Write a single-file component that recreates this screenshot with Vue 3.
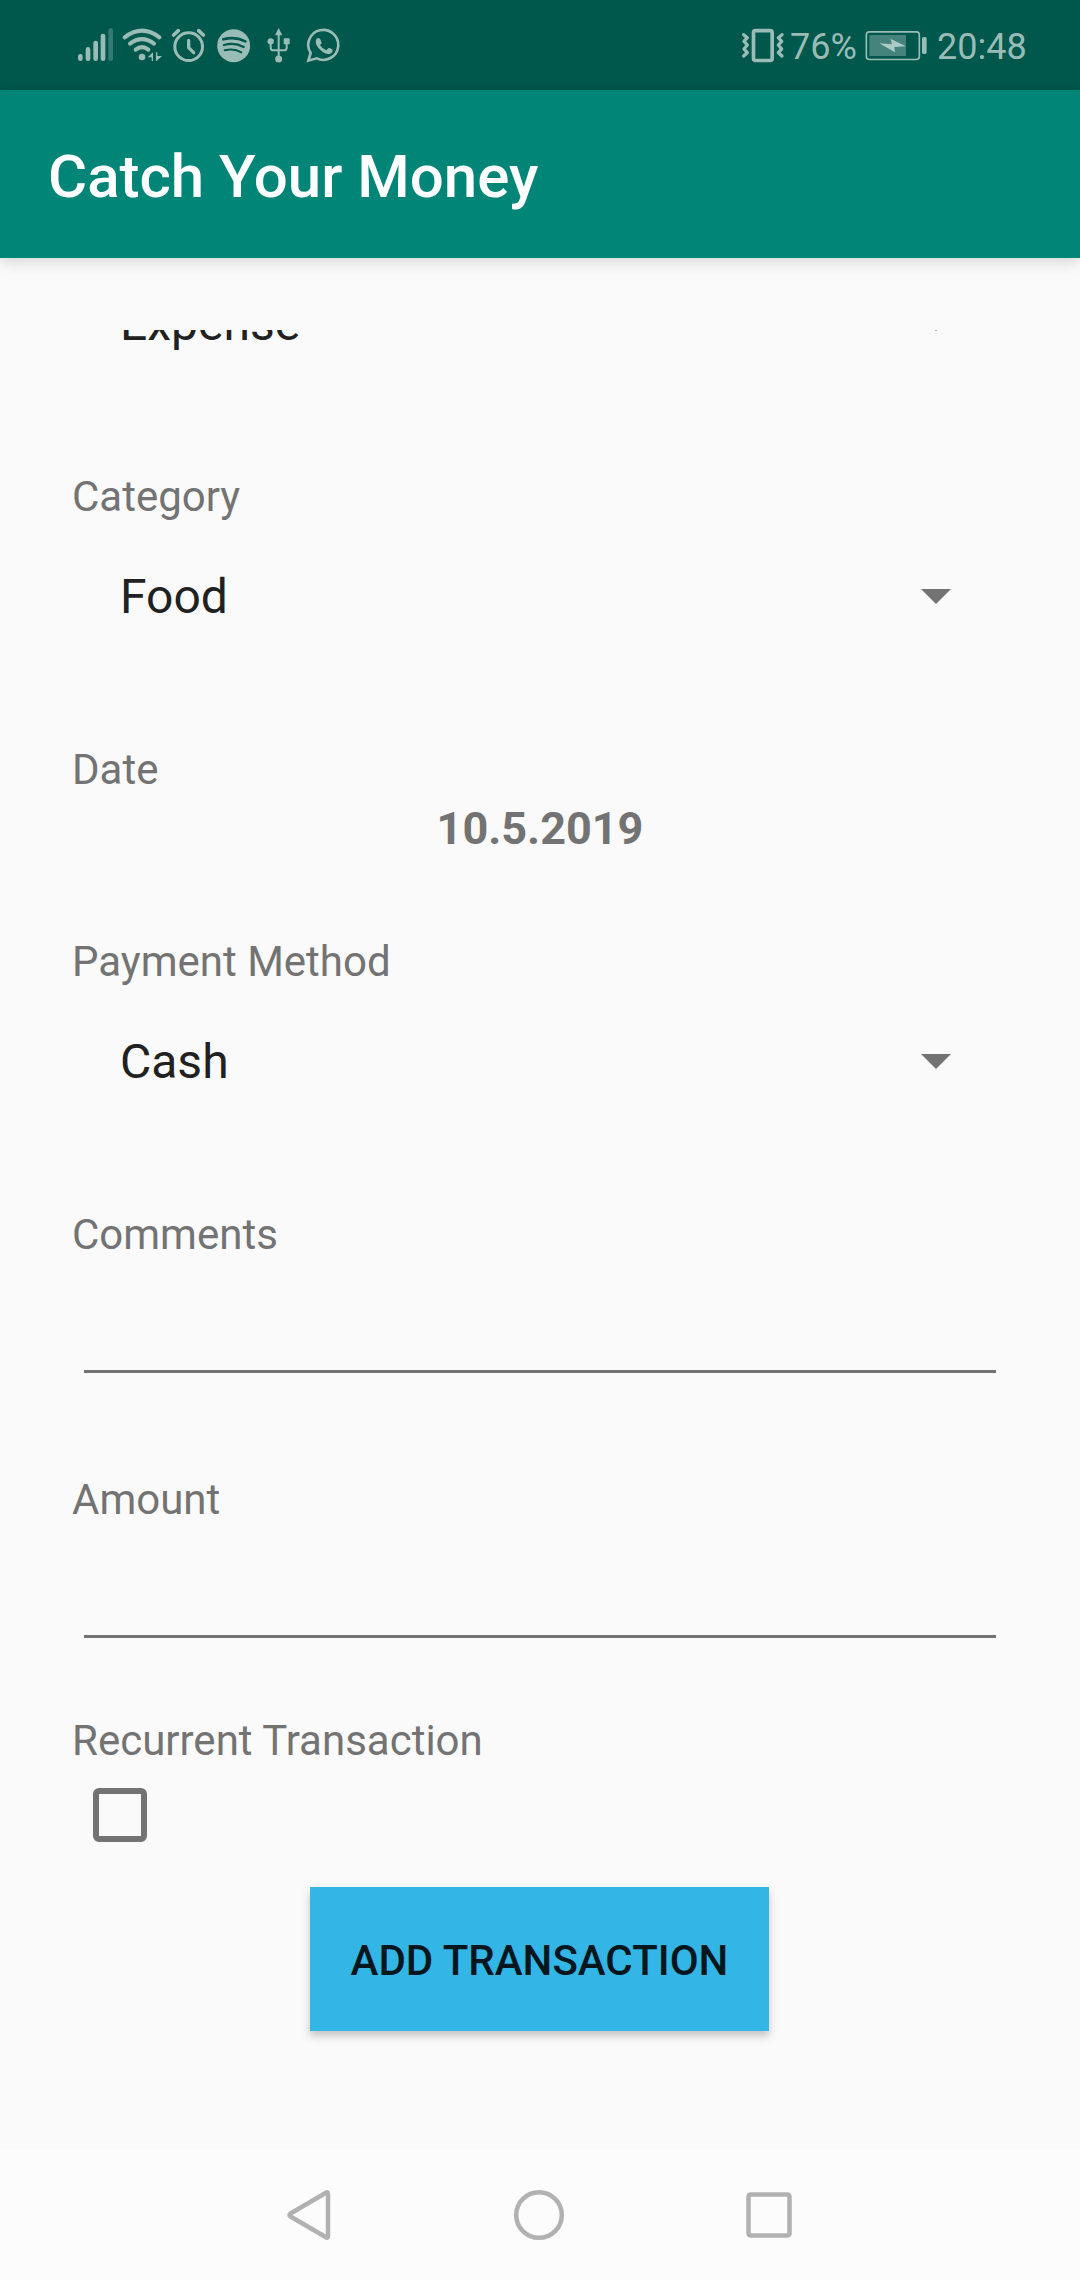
<script setup>
import { ref } from 'vue'

const comments = ref('')
const amount = ref('')
const recurrent = ref(false)
</script>

<template>
  <div class="screen">
    <header class="status">
      <div class="status-left">
        <svg class="ic signal" viewBox="51 45 111 120" width="37" height="40">
          <g stroke="currentColor" stroke-width="14" stroke-linecap="round">
            <path d="M61 139V146M84 118V146M107 99V146M129 78V146" />
            <path d="M152 61V146" opacity=".35" />
          </g>
        </svg>
        <svg class="ic wifi" viewBox="186 45 123 120" width="41" height="40">
          <g fill="none" stroke="currentColor" stroke-width="12" stroke-linecap="round">
            <path d="M194 82Q246 42 298 82" />
            <path d="M210 101Q246 74 282 101" />
            <path d="M227 119Q246 104 265 119" />
          </g>
          <circle cx="246" cy="141" r="10" fill="currentColor" />
          <path d="M263 142L279 127V153H275V142ZM288 127H292V138H306L290 153H288Z" fill="currentColor" />
        </svg>
        <svg class="ic alarm" viewBox="333 45 105 120" width="35" height="40">
          <g fill="none" stroke="currentColor" stroke-width="9">
            <circle cx="386" cy="110" r="41.500" />
            <path d="M386 91V113L401 128" stroke-width="10" stroke-linecap="round" stroke-linejoin="round" />
            <path d="M341 75L355 62M430 75L416 62" stroke-width="11" stroke-linecap="round" />
          </g>
        </svg>
        <svg class="ic music" viewBox="468 45 105 120" width="35" height="40">
          <circle cx="521" cy="107" r="49.500" fill="currentColor" />
          <g fill="none" stroke="#00574b" stroke-linecap="round">
            <path d="M490 88Q525 78 556 94" stroke-width="8" />
            <path d="M492 105Q524 96 551 111" stroke-width="7" />
            <path d="M494 121Q523 114 544 127" stroke-width="6" />
          </g>
        </svg>
        <svg class="ic usb" viewBox="618 45 75 120" width="25" height="40">
          <g fill="none" stroke="currentColor" stroke-width="6">
            <path d="M656 68V145" />
            <path d="M632 96V113Q632 121 640 121H672Q680 121 680 113V96" />
          </g>
          <g fill="currentColor">
            <path d="M656 54L667 76H645Z" />
            <circle cx="632" cy="94" r="9.500" />
            <rect x="671" y="85" width="18" height="18" rx="2" />
            <circle cx="656" cy="147" r="10.500" />
          </g>
        </svg>
        <svg class="ic chat" viewBox="738 45 105 120" width="35" height="40">
          <path d="M745 152L752 129A45 45 0 1 1 770 145Z" fill="none" stroke="currentColor" stroke-width="8" stroke-linejoin="miter" />
          <path d="M769 87Q775 81 780 86L785 98Q784 102 780 105Q787 117 799 121L805 115Q808 113 811 115L818 119Q819 127 811 131Q801 135 787 125Q773 115 768 103Q765 94 769 87Z" fill="currentColor" />
        </svg>
      </div>
      <div class="status-right">
        <svg class="ic vibrate" viewBox="63 45 132 120" width="44" height="40">
          <rect x="100.500" y="62" width="56" height="89.500" rx="6" fill="none" stroke="currentColor" stroke-width="11" />
          <g fill="none" stroke="currentColor" stroke-width="10" stroke-linejoin="round" stroke-linecap="round">
            <path d="M71 74L82 83L72 94L82 105L72 117L82 128L71 138" />
            <path d="M186 74L175 83L185 94L175 105L185 117L175 128L186 138" />
          </g>
        </svg>
        <span class="percent">76%</span>
        <svg class="ic battery" viewBox="435 45 189 120" width="63" height="40">
          <rect x="439" y="65.500" width="159" height="83" rx="9" fill="none" stroke="currentColor" stroke-width="5" />
          <rect x="448" y="75" width="110" height="63" rx="2" fill="currentColor" opacity=".45" />
          <path d="M478 100L516 103L512 87L558 109L523 111L525 127Z" fill="#adcbc6" />
          <rect x="606" y="81" width="14" height="51" rx="5" fill="currentColor" />
        </svg>
        <span class="clock">20:48</span>
      </div>
    </header>

    <div class="appbar"><h1>Catch Your Money</h1></div>

    <main class="form">
      <div class="spinner clipped">
        <span>Expense</span>
        <svg width="30" height="15" viewBox="0 0 30 15"><path d="M0 0H30L15 15Z" /></svg>
      </div>

      <section class="field select">
        <label>Category</label>
        <div class="spinner">
          <span>Food</span>
          <svg width="30" height="15" viewBox="0 0 30 15"><path d="M0 0H30L15 15Z" /></svg>
        </div>
      </section>

      <section class="field day">
        <label>Date</label>
        <div class="date">10.5.2019</div>
      </section>

      <section class="field select">
        <label>Payment Method</label>
        <div class="spinner">
          <span>Cash</span>
          <svg width="30" height="15" viewBox="0 0 30 15"><path d="M0 0H30L15 15Z" /></svg>
        </div>
      </section>

      <section class="field entry">
        <label for="comments">Comments</label>
        <input id="comments" v-model="comments" type="text" />
      </section>

      <section class="field entry last">
        <label for="amount">Amount</label>
        <input id="amount" v-model="amount" type="text" />
      </section>

      <section class="field check">
        <label for="recurrent">Recurrent Transaction</label>
        <input id="recurrent" v-model="recurrent" type="checkbox" />
      </section>

      <button type="button">ADD TRANSACTION</button>
    </main>

    <nav class="navbar">
      <svg width="44" height="52" viewBox="0 0 44 52"><path d="M39 3.700Q41 2.500 41 5V47Q41 49.500 39 48.300L3.500 27.500Q1.500 26 3.500 24.500Z" /></svg>
      <svg width="52" height="52" viewBox="0 0 52 52"><circle cx="26" cy="26" r="22.800" /></svg>
      <svg width="46" height="52" viewBox="0 0 46 52"><rect x="2.500" y="5.500" width="41" height="41" rx="2" /></svg>
    </nav>
  </div>
</template>

<style>
body {
  margin: 0;
  background: #fafafa;
}
</style>

<style scoped>
.screen {
  width: 1080px;
  height: 2280px;
  display: flex;
  flex-direction: column;
  overflow: hidden;
  background: #fafafa;
  font-family: Roboto, "Noto Sans", sans-serif;
}
.status {
  height: 90px;
  flex: none;
  box-sizing: border-box;
  padding: 25px 54px 0 77px;
  display: flex;
  justify-content: space-between;
  background: #00574b;
  color: #99bcb7;
}
.status-left,
.status-right {
  display: flex;
  height: 40px;
}
.ic {
  display: block;
  flex: none;
}
.wifi,
.alarm {
  margin-left: 8px;
}
.music {
  margin-left: 10px;
}
.usb,
.chat {
  margin-left: 15px;
}
.percent,
.clock {
  font-size: 36px;
  line-height: 44px;
  white-space: nowrap;
}
.percent {
  width: 75px;
  margin-left: 5px;
}
.clock {
  width: 89px;
  margin-left: 9px;
}
.appbar {
  height: 168px;
  flex: none;
  box-sizing: border-box;
  display: flex;
  align-items: center;
  padding: 5px 0 0 48px;
  background: #008577;
  box-shadow: 0 3px 14px rgba(0, 0, 0, 0.16);
}
h1 {
  margin: 0;
  font-size: 60px;
  line-height: 72px;
  font-weight: 500;
  color: #fff;
}
.form {
  height: 1750px;
  flex: none;
  margin-top: 72px;
  padding: 0 72px;
  display: flex;
  flex-direction: column;
  overflow: hidden;
}
.field {
  flex: none;
  display: flex;
  flex-direction: column;
}
label {
  font-size: 42px;
  line-height: 50px;
  color: #737373;
}
.spinner {
  height: 72px;
  flex: none;
  display: flex;
  align-items: center;
  justify-content: space-between;
  padding: 0 57px 0 48px;
  font-size: 48px;
  line-height: 72px;
  color: #212121;
}
.spinner svg {
  display: block;
  margin-bottom: 1px;
  fill: #737373;
}
/* The first spinner is scrolled partly out of the form's viewport. */
.clipped {
  margin: -42px 0 112px;
}
.select {
  gap: 39px;
  margin-bottom: 112px;
}
.day {
  gap: 7px;
  margin-bottom: 81px;
}
.date {
  text-align: center;
  font-size: 45px;
  line-height: 54px;
  font-weight: 700;
  color: #737373;
}
.entry {
  margin-bottom: 102px;
}
.entry.last {
  margin-bottom: 78px;
}
.entry input {
  height: 113px;
  margin: 0 12px;
  padding: 0;
  box-sizing: border-box;
  border: 0;
  border-bottom: 3px solid #737373;
  border-radius: 0;
  background: transparent;
  font: 54px Roboto, sans-serif;
  outline: none;
}
.check {
  gap: 22px;
  margin-bottom: 45px;
}
.check input {
  appearance: none;
  width: 54px;
  height: 54px;
  margin: 0 0 0 21px;
  box-sizing: border-box;
  border: 6px solid #737373;
  border-radius: 6px;
}
.check input:checked {
  background: #737373;
}
button {
  width: 459px;
  height: 144px;
  flex: none;
  margin: 0 0 0 238px;
  padding: 4px 0 0;
  border: 0;
  background: #33b5e5;
  color: #02161d;
  font: 500 42px/50px Roboto, sans-serif;
  white-space: nowrap;
  box-shadow: 0 5px 8px rgba(0, 0, 0, 0.22);
}
.navbar {
  flex: 1;
  margin-top: 69px;
  box-sizing: border-box;
  padding: 40px 288px 0 286px;
  display: flex;
  justify-content: space-between;
  background: #fcfcfc;
}
.navbar svg {
  fill: none;
  stroke: #b1b1b1;
  stroke-width: 4.5;
  stroke-linejoin: round;
}
.navbar svg:nth-child(-n + 2) {
  position: relative;
  left: 1px;
}
</style>
